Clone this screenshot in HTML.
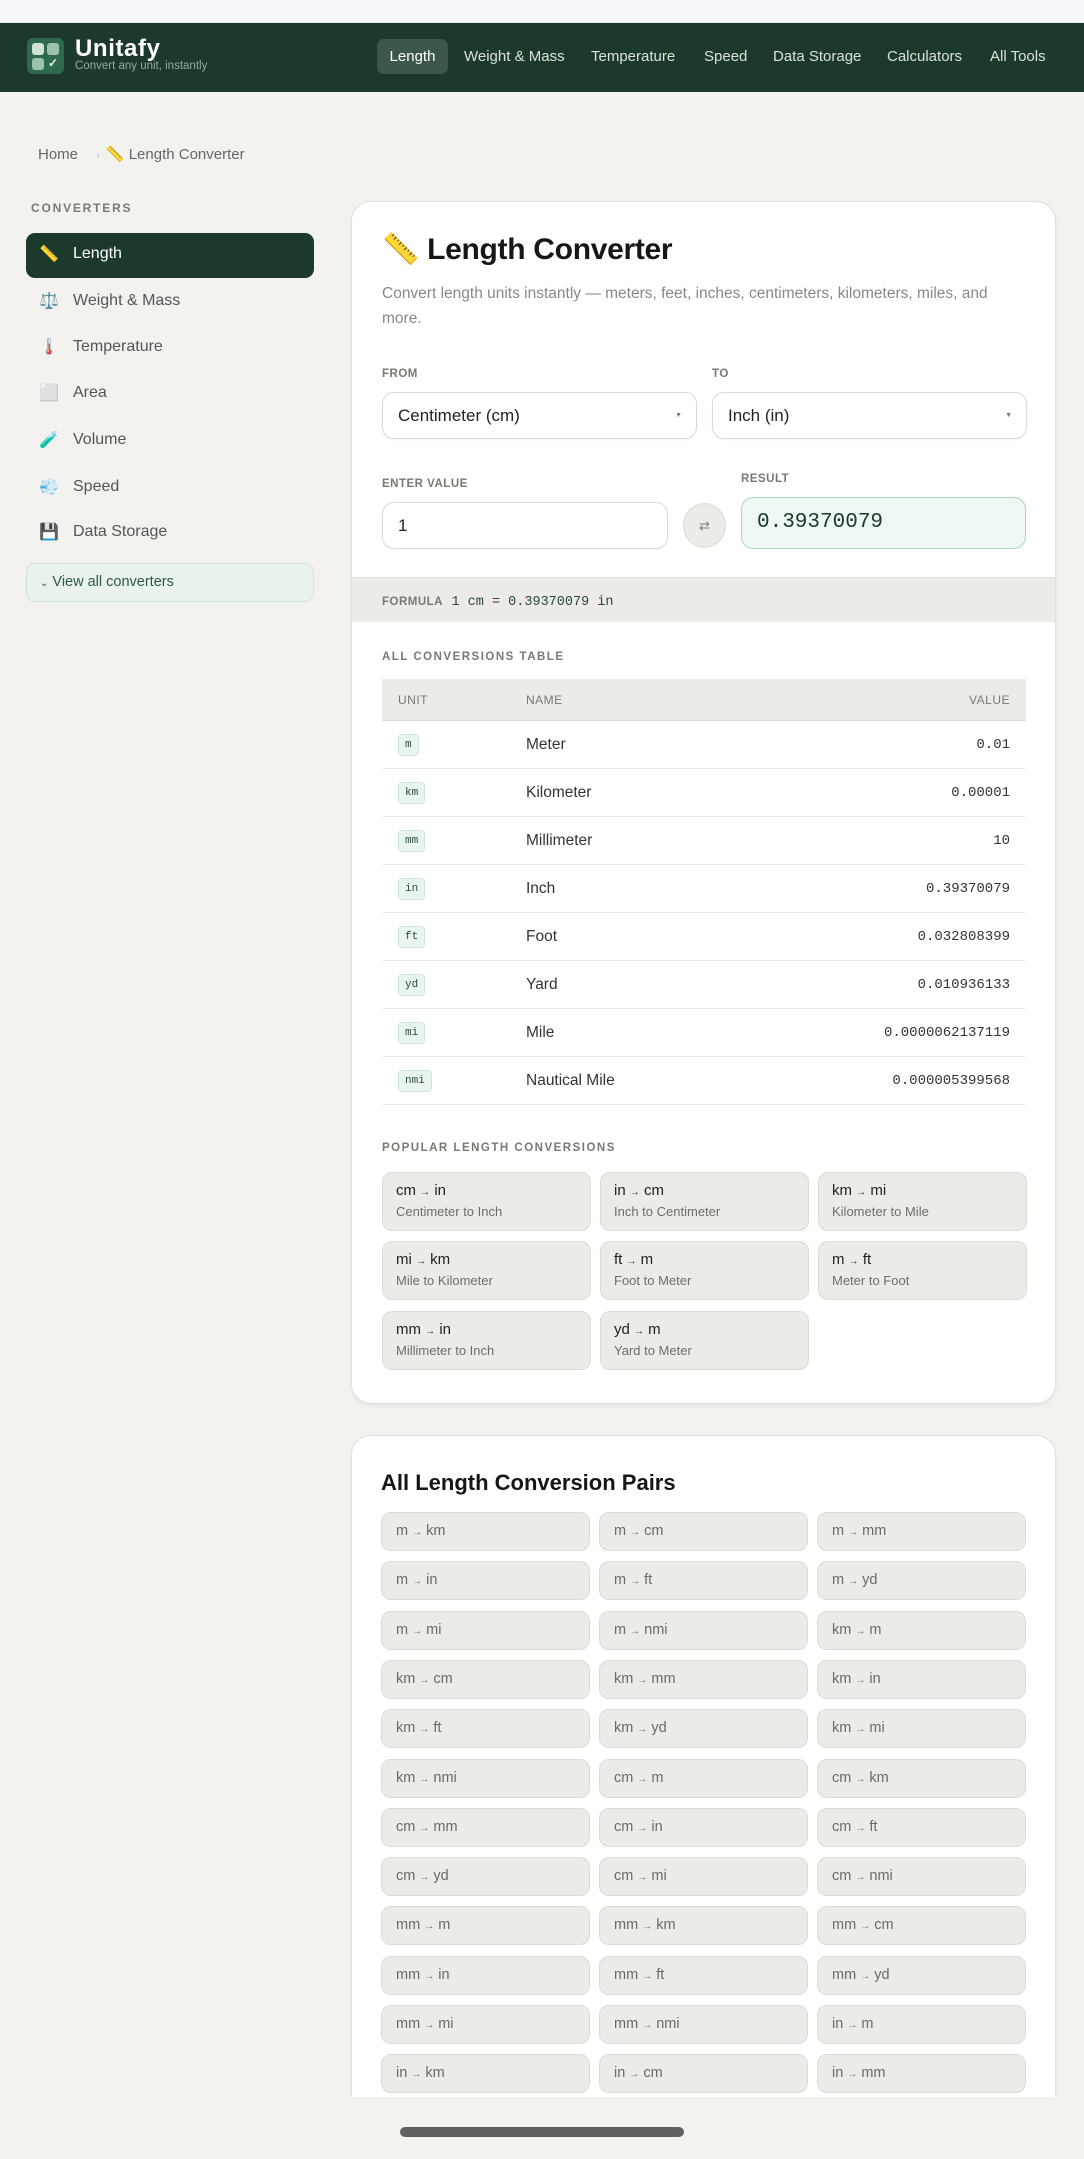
<!DOCTYPE html>
<html><head><meta charset="utf-8">
<style>
*{box-sizing:border-box;margin:0;padding:0}
body{width:1084px;height:2159px;overflow:hidden;background:#f3f2ee;font-family:"Liberation Sans",sans-serif;color:#2a2a28;position:relative}
.a{position:absolute}
.topbar{left:0;top:0;width:1084px;height:23px;background:#f8f8fc;border-bottom:1px solid #e4e4ea}
.hdr{left:0;top:23px;width:1084px;height:69px;background:#1c3a2b}
.logo{left:27px;top:38px;width:37px;height:36px;background:#2e6a4b;border-radius:6px}
.sq{position:absolute;width:12px;height:12px;border-radius:3px}
.nav{top:39px;height:35px;line-height:35px;font-size:15px;color:#d8e2dc}
.lbl{font-size:12px;letter-spacing:.5px;color:#7a7870;font-weight:bold}
.side{left:50px;font-size:16px;color:#555}
.ico{position:absolute;left:38px;width:22px;text-align:center;font-size:16px}
.card{background:#fff;border:1px solid #e2e0da;border-radius:20px;box-shadow:0 2px 4px rgba(0,0,0,.06);overflow:hidden}
.box{border:1px solid #dcdbd6;border-radius:12px;background:#fff;box-shadow:0 1px 2px rgba(0,0,0,.05)}
.chip{position:absolute;left:16px;top:13px;height:22px;line-height:20px;padding:0 6px;background:#eaf5ee;border:1px solid #cfe6d8;border-radius:4px;font-family:"Liberation Mono",monospace;font-size:11px;color:#2a4a38}
.row{position:absolute;left:0;width:644px;height:48px;border-bottom:1px solid #ebeae5}
.row .n{position:absolute;left:144px;top:0;line-height:48px;font-size:15.5px;color:#333}
.row .v{position:absolute;right:16px;top:0;line-height:48px;font-family:"Liberation Mono",monospace;font-size:14px;color:#333}
.pc{position:absolute;width:209px;height:59px;background:#ecebe6;border:1px solid #dcdbd5;border-radius:10px;padding:9px 13px}
.pc b{display:block;font-weight:normal;font-size:15px;color:#222}
.pc i{display:block;font-style:normal;font-size:13px;color:#6f6d66;margin-top:5px}
.pp{position:absolute;width:209px;height:39px;line-height:37px;background:#ecebe6;border:1px solid #dcdbd5;border-radius:10px;padding-left:14px;font-size:14.5px;color:#6c6a64}
s{text-decoration:none;font-size:10px}
</style></head><body>
<div class="a topbar"></div>
<div class="a hdr"></div>
<div class="a logo">
 <div class="sq" style="left:5px;top:5px;background:#cfe3d6"></div>
 <div class="sq" style="left:20px;top:5px;background:#9cc3ab"></div>
 <div class="sq" style="left:5px;top:20px;background:#9cc3ab"></div>
 <div style="position:absolute;left:21px;top:18px;color:#e8f3ec;font-size:12px;font-weight:bold">✓</div>
</div>
<div class="a" style="left:75px;top:36px;font-size:24px;font-weight:bold;color:#fff;letter-spacing:.6px;line-height:26px">Unitafy</div>
<div class="a" style="left:75px;top:60px;font-size:11.5px;color:#8fae9c;line-height:13px">Convert any unit, instantly</div>
<div class="a nav" style="left:377px;width:71px;background:#3c5848;border-radius:7px;text-align:center;color:#fff">Length</div>
<div class="a nav" style="left:464px">Weight &amp; Mass</div>
<div class="a nav" style="left:591px">Temperature</div>
<div class="a nav" style="left:704px">Speed</div>
<div class="a nav" style="left:773px">Data Storage</div>
<div class="a nav" style="left:887px">Calculators</div>
<div class="a nav" style="left:990px">All Tools</div>

<div class="a" style="left:38px;top:145px;font-size:15px;color:#666">Home <span style="color:#bbb;font-size:11px;margin:0 6px 0 14px">›</span>📏 Length Converter</div>

<div class="a lbl" style="left:31px;top:201px;letter-spacing:1.8px">CONVERTERS</div>
<div class="a" style="left:26px;top:233px;width:288px;height:45px;background:#1c3a2b;border-radius:9px"></div>
<div class="a ico" style="top:244px">📏</div><div class="a side" style="left:73px;top:245px;color:#fff">Length</div>
<div class="a ico" style="top:291px">⚖️</div><div class="a side" style="left:73px;top:292px">Weight &amp; Mass</div>
<div class="a ico" style="top:337px">🌡️</div><div class="a side" style="left:73px;top:338px">Temperature</div>
<div class="a ico" style="top:383px">⬜</div><div class="a side" style="left:73px;top:384px">Area</div>
<div class="a ico" style="top:430px">🧪</div><div class="a side" style="left:73px;top:431px">Volume</div>
<div class="a ico" style="top:477px">💨</div><div class="a side" style="left:73px;top:478px">Speed</div>
<div class="a ico" style="top:522px">💾</div><div class="a side" style="left:73px;top:523px">Data Storage</div>
<div class="a" style="left:26px;top:563px;width:288px;height:39px;background:#e9f3ec;border:1px solid #cfe6d6;border-radius:9px;line-height:37px;padding-left:13px;font-size:14.5px;color:#2d5a40"><span style="font-size:10px">⌄</span> View all converters</div>

<div class="a card" style="left:351px;top:201px;width:705px;height:1203px">
 <div class="a" style="left:30px;top:30px;font-size:30px;font-weight:bold;color:#161616;letter-spacing:-.3px">📏 Length Converter</div>
 <div class="a" style="left:30px;top:79px;width:640px;font-size:15.5px;line-height:25px;color:#8a8882">Convert length units instantly — meters, feet, inches, centimeters, kilometers, miles, and more.</div>
 <div class="a lbl" style="left:30px;top:166px;font-size:11.5px">FROM</div>
 <div class="a lbl" style="left:360px;top:166px;font-size:11.5px">TO</div>
 <div class="a box" style="left:30px;top:190px;width:315px;height:47px;line-height:45px;padding-left:15px;font-size:17px;color:#222">Centimeter (cm)<span style="position:absolute;right:14px;font-size:7px;color:#777">▼</span></div>
 <div class="a box" style="left:360px;top:190px;width:315px;height:47px;line-height:45px;padding-left:15px;font-size:17px;color:#222">Inch (in)<span style="position:absolute;right:14px;font-size:7px;color:#777">▼</span></div>
 <div class="a lbl" style="left:30px;top:276px;font-size:11.5px">ENTER VALUE</div>
 <div class="a lbl" style="left:389px;top:271px;font-size:11.5px">RESULT</div>
 <div class="a box" style="left:30px;top:300px;width:286px;height:47px;line-height:45px;padding-left:15px;font-size:17px;color:#222">1</div>
 <div class="a" style="left:331px;top:301px;width:43px;height:45px;border-radius:50%;background:#ecebe6;border:1px solid #dcdbd5;text-align:center;line-height:43px;font-size:13px;color:#777">⇄</div>
 <div class="a" style="left:389px;top:295px;width:285px;height:52px;border-radius:12px;background:#eef7f1;border:1px solid #a9d9bb;line-height:50px;padding-left:15px;font-family:'Liberation Mono',monospace;font-size:21px;color:#1c3a2b">0.39370079</div>
 <div class="a" style="left:0;top:375px;width:705px;height:45px;background:#ecebe6;border-top:1px solid #e0dfda;line-height:45px;padding-left:30px"><span class="lbl" style="font-size:11.5px">FORMULA</span> <span style="font-family:'Liberation Mono',monospace;font-size:13.5px;color:#2a4a38;margin-left:4px">1 cm = 0.39370079 in</span></div>
 <div class="a lbl" style="left:30px;top:449px;font-size:11.5px;letter-spacing:1.5px">ALL CONVERSIONS TABLE</div>
 <div class="a" style="left:30px;top:477px;width:644px;height:42px;background:#ecebe6;border-bottom:1px solid #dcdbd5">
  <span class="a lbl" style="left:16px;top:14px;font-weight:normal;font-size:12px">UNIT</span>
  <span class="a lbl" style="left:144px;top:14px;font-weight:normal;font-size:12px">NAME</span>
  <span class="a lbl" style="right:16px;top:14px;font-weight:normal;font-size:12px">VALUE</span>
 </div>
 <div class="a" style="left:30px;top:519px">
  <div class="row" style="top:0"><span class="chip">m</span><span class="n">Meter</span><span class="v">0.01</span></div>
  <div class="row" style="top:48px"><span class="chip">km</span><span class="n">Kilometer</span><span class="v">0.00001</span></div>
  <div class="row" style="top:96px"><span class="chip">mm</span><span class="n">Millimeter</span><span class="v">10</span></div>
  <div class="row" style="top:144px"><span class="chip">in</span><span class="n">Inch</span><span class="v">0.39370079</span></div>
  <div class="row" style="top:192px"><span class="chip">ft</span><span class="n">Foot</span><span class="v">0.032808399</span></div>
  <div class="row" style="top:240px"><span class="chip">yd</span><span class="n">Yard</span><span class="v">0.010936133</span></div>
  <div class="row" style="top:288px"><span class="chip">mi</span><span class="n">Mile</span><span class="v">0.0000062137119</span></div>
  <div class="row" style="top:336px"><span class="chip">nmi</span><span class="n">Nautical Mile</span><span class="v">0.000005399568</span></div>
 </div>
 <div class="a lbl" style="left:30px;top:940px;font-size:11.5px;letter-spacing:1.5px">POPULAR LENGTH CONVERSIONS</div>
 <div class="a" style="left:30px;top:970px">
  <div class="pc" style="left:0;top:0"><b>cm <s>→</s> in</b><i>Centimeter to Inch</i></div>
  <div class="pc" style="left:218px;top:0"><b>in <s>→</s> cm</b><i>Inch to Centimeter</i></div>
  <div class="pc" style="left:436px;top:0"><b>km <s>→</s> mi</b><i>Kilometer to Mile</i></div>
  <div class="pc" style="left:0;top:69px"><b>mi <s>→</s> km</b><i>Mile to Kilometer</i></div>
  <div class="pc" style="left:218px;top:69px"><b>ft <s>→</s> m</b><i>Foot to Meter</i></div>
  <div class="pc" style="left:436px;top:69px"><b>m <s>→</s> ft</b><i>Meter to Foot</i></div>
  <div class="pc" style="left:0;top:139px"><b>mm <s>→</s> in</b><i>Millimeter to Inch</i></div>
  <div class="pc" style="left:218px;top:139px"><b>yd <s>→</s> m</b><i>Yard to Meter</i></div>
 </div>
</div>

<div class="a card" style="left:351px;top:1435px;width:705px;height:700px;border-bottom-left-radius:0;border-bottom-right-radius:0"></div>
<div class="a" style="left:381px;top:1470px;font-size:22px;font-weight:bold;color:#161616">All Length Conversion Pairs</div>
<div class="a" style="left:381px;top:1512px">
<div class="pp" style="left:0;top:0">m <s>→</s> km</div><div class="pp" style="left:218px;top:0">m <s>→</s> cm</div><div class="pp" style="left:436px;top:0">m <s>→</s> mm</div>
<div class="pp" style="left:0;top:49px">m <s>→</s> in</div><div class="pp" style="left:218px;top:49px">m <s>→</s> ft</div><div class="pp" style="left:436px;top:49px">m <s>→</s> yd</div>
<div class="pp" style="left:0;top:99px">m <s>→</s> mi</div><div class="pp" style="left:218px;top:99px">m <s>→</s> nmi</div><div class="pp" style="left:436px;top:99px">km <s>→</s> m</div>
<div class="pp" style="left:0;top:148px">km <s>→</s> cm</div><div class="pp" style="left:218px;top:148px">km <s>→</s> mm</div><div class="pp" style="left:436px;top:148px">km <s>→</s> in</div>
<div class="pp" style="left:0;top:197px">km <s>→</s> ft</div><div class="pp" style="left:218px;top:197px">km <s>→</s> yd</div><div class="pp" style="left:436px;top:197px">km <s>→</s> mi</div>
<div class="pp" style="left:0;top:247px">km <s>→</s> nmi</div><div class="pp" style="left:218px;top:247px">cm <s>→</s> m</div><div class="pp" style="left:436px;top:247px">cm <s>→</s> km</div>
<div class="pp" style="left:0;top:296px">cm <s>→</s> mm</div><div class="pp" style="left:218px;top:296px">cm <s>→</s> in</div><div class="pp" style="left:436px;top:296px">cm <s>→</s> ft</div>
<div class="pp" style="left:0;top:345px">cm <s>→</s> yd</div><div class="pp" style="left:218px;top:345px">cm <s>→</s> mi</div><div class="pp" style="left:436px;top:345px">cm <s>→</s> nmi</div>
<div class="pp" style="left:0;top:394px">mm <s>→</s> m</div><div class="pp" style="left:218px;top:394px">mm <s>→</s> km</div><div class="pp" style="left:436px;top:394px">mm <s>→</s> cm</div>
<div class="pp" style="left:0;top:444px">mm <s>→</s> in</div><div class="pp" style="left:218px;top:444px">mm <s>→</s> ft</div><div class="pp" style="left:436px;top:444px">mm <s>→</s> yd</div>
<div class="pp" style="left:0;top:493px">mm <s>→</s> mi</div><div class="pp" style="left:218px;top:493px">mm <s>→</s> nmi</div><div class="pp" style="left:436px;top:493px">in <s>→</s> m</div>
<div class="pp" style="left:0;top:542px">in <s>→</s> km</div><div class="pp" style="left:218px;top:542px">in <s>→</s> cm</div><div class="pp" style="left:436px;top:542px">in <s>→</s> mm</div>
</div>
<div class="a" style="left:0;top:2097px;width:1084px;height:62px;background:#f3f2ee"></div>
<div class="a" style="left:400px;top:2127px;width:284px;height:10px;border-radius:5px;background:#606060"></div>
</body></html>
